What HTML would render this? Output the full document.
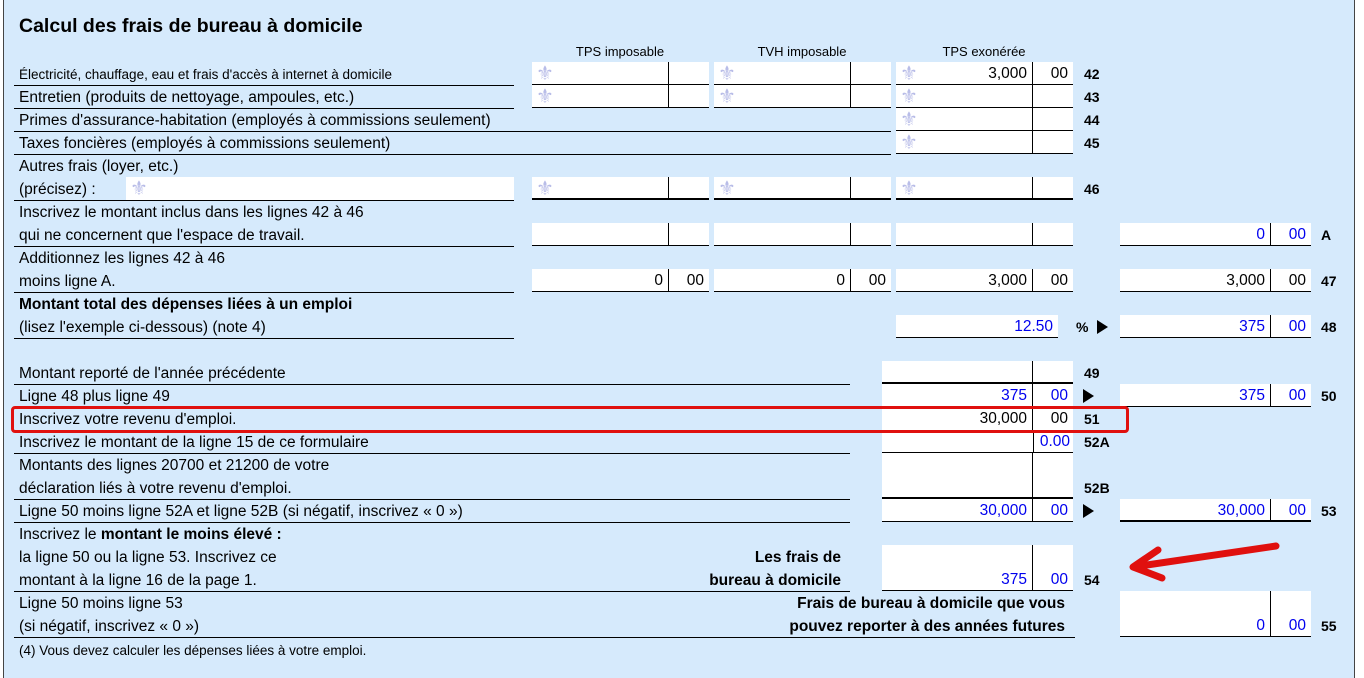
<!DOCTYPE html>
<html><head><meta charset="utf-8"><style>
*{margin:0;padding:0;box-sizing:border-box}
body{width:1364px;height:678px;background:#fff;font-family:"Liberation Sans",Arial,sans-serif;font-size:15.5px;color:#000;position:relative;overflow:hidden}
#bg{position:absolute;left:3px;top:0;width:1352px;height:678px;background:#d6eafc;border-left:1px solid #444;border-right:1px solid #444}
.a{position:absolute}
.t{position:absolute;line-height:23px;white-space:nowrap}
.h{position:absolute;font-size:13px;line-height:14px;text-align:center}
.ln{position:absolute;height:1px;background:#000}
.f{position:absolute;height:23px;background:#fff;border-bottom:1px solid #000;line-height:23px;text-align:right;padding-right:5px;white-space:nowrap}
.f.k{border-right:1px solid #000}
.f.th{border-bottom:2px solid #000}
.bl{color:#0000ee}
.fl{position:absolute;left:4px;top:0;color:#b9bde8;font-size:20px;line-height:22px;font-family:"DejaVu Sans",sans-serif}
.n{position:absolute;font-weight:bold;font-size:14px;line-height:23px}
.tri{position:absolute;width:0;height:0;border-top:7px solid transparent;border-bottom:7px solid transparent;border-left:11px solid #000}
.b{font-weight:bold;font-size:15.5px}
</style></head><body>
<div id="bg"></div>
<div class="t" style="left:19px;top:15px;font-size:19.5px;font-weight:bold">Calcul des frais de bureau à domicile</div>
<div class="h" style="left:532px;top:45px;width:176px">TPS imposable</div>
<div class="h" style="left:714px;top:45px;width:176px">TVH imposable</div>
<div class="h" style="left:896px;top:45px;width:176px">TPS exonérée</div>

<div class="t" style="left:19px;top:63px;font-size:13.5px">Électricité, chauffage, eau et frais d'accès à internet à domicile</div>
<div class="ln" style="left:14px;top:85px;width:500px"></div>
<div class="t" style="left:19px;top:86px">Entretien (produits de nettoyage, ampoules, etc.)</div>
<div class="ln" style="left:14px;top:108px;width:500px"></div>
<div class="t" style="left:19px;top:109px">Primes d'assurance-habitation (employés à commissions seulement)</div>
<div class="ln" style="left:14px;top:131px;width:877px"></div>
<div class="t" style="left:19px;top:132px">Taxes foncières (employés à commissions seulement)</div>
<div class="ln" style="left:14px;top:154px;width:877px"></div>
<div class="t" style="left:19px;top:155px">Autres frais (loyer, etc.)</div>
<div class="t" style="left:19px;top:178px">(précisez) :</div>
<div class="f" style="left:126px;top:177px;width:388px;border-bottom:none"><span class="fl">⚜</span></div>
<div class="ln" style="left:14px;top:200px;width:500px"></div>
<div class="t" style="left:19px;top:201px">Inscrivez le montant inclus dans les lignes 42 à 46</div>
<div class="t" style="left:19px;top:224px">qui ne concernent que l'espace de travail.</div>
<div class="ln" style="left:14px;top:246px;width:500px"></div>
<div class="t" style="left:19px;top:247px">Additionnez les lignes 42 à 46</div>
<div class="t" style="left:19px;top:270px">moins ligne A.</div>
<div class="ln" style="left:14px;top:292px;width:500px"></div>
<div class="t b" style="left:19px;top:293px">Montant total des dépenses liées à un emploi</div>
<div class="t" style="left:19px;top:316px">(lisez l'exemple ci-dessous) (note 4)</div>
<div class="ln" style="left:14px;top:338px;width:500px"></div>
<div class="t" style="left:19px;top:362px">Montant reporté de l'année précédente</div>
<div class="ln" style="left:14px;top:384px;width:836px"></div>
<div class="t" style="left:19px;top:385px">Ligne 48 plus ligne 49</div>
<div class="ln" style="left:14px;top:407px;width:836px"></div>
<div class="t" style="left:19px;top:408px">Inscrivez votre revenu d'emploi.</div>
<div class="t" style="left:19px;top:431px">Inscrivez le montant de la ligne 15 de ce formulaire</div>
<div class="ln" style="left:14px;top:453px;width:836px"></div>
<div class="t" style="left:19px;top:454px">Montants des lignes 20700 et 21200 de votre</div>
<div class="t" style="left:19px;top:477px">déclaration liés à votre revenu d'emploi.</div>
<div class="ln" style="left:14px;top:499px;width:836px"></div>
<div class="t" style="left:19px;top:500px">Ligne 50 moins ligne 52A et ligne 52B (si négatif, inscrivez « 0 »)</div>
<div class="ln" style="left:14px;top:522px;width:836px"></div>
<div class="t" style="left:19px;top:523px">Inscrivez le <b>montant le moins élevé :</b></div>
<div class="t" style="left:19px;top:546px">la ligne 50 ou la ligne 53. Inscrivez ce</div>
<div class="t" style="left:19px;top:569px">montant à la ligne 16 de la page 1.</div>
<div class="t b" style="left:650px;top:546px;width:191px;text-align:right">Les frais de</div>
<div class="t b" style="left:650px;top:569px;width:191px;text-align:right">bureau à domicile</div>
<div class="ln" style="left:14px;top:591px;width:836px"></div>
<div class="t" style="left:19px;top:592px">Ligne 50 moins ligne 53</div>
<div class="t" style="left:19px;top:615px">(si négatif, inscrivez « 0 »)</div>
<div class="t b" style="left:700px;top:592px;width:365px;text-align:right">Frais de bureau à domicile que vous</div>
<div class="t b" style="left:700px;top:615px;width:365px;text-align:right">pouvez reporter à des années futures</div>
<div class="ln" style="left:14px;top:637px;width:1061px"></div>
<div class="t" style="left:19px;top:639px;font-size:13.5px">(4) Vous devez calculer les dépenses liées à votre emploi.</div>

<div class="f k" style="left:532px;top:62px;width:137px"><span class="fl">⚜</span></div><div class="f" style="left:669px;top:62px;width:40px"></div>
<div class="f k" style="left:714px;top:62px;width:137px"><span class="fl">⚜</span></div><div class="f" style="left:851px;top:62px;width:40px"></div>
<div class="f k" style="left:896px;top:62px;width:137px"><span class="fl">⚜</span>3,000</div><div class="f" style="left:1033px;top:62px;width:40px">00</div>
<div class="n" style="left:1084px;top:63px">42</div>
<div class="f k" style="left:532px;top:85px;width:137px"><span class="fl">⚜</span></div><div class="f" style="left:669px;top:85px;width:40px"></div>
<div class="f k" style="left:714px;top:85px;width:137px"><span class="fl">⚜</span></div><div class="f" style="left:851px;top:85px;width:40px"></div>
<div class="f k" style="left:896px;top:85px;width:137px"><span class="fl">⚜</span></div><div class="f" style="left:1033px;top:85px;width:40px"></div>
<div class="n" style="left:1084px;top:86px">43</div>
<div class="f k" style="left:896px;top:108px;width:137px"><span class="fl">⚜</span></div><div class="f" style="left:1033px;top:108px;width:40px"></div>
<div class="n" style="left:1084px;top:109px">44</div>
<div class="f k" style="left:896px;top:131px;width:137px"><span class="fl">⚜</span></div><div class="f" style="left:1033px;top:131px;width:40px"></div>
<div class="n" style="left:1084px;top:132px">45</div>
<div class="f k th" style="left:532px;top:177px;width:137px"><span class="fl">⚜</span></div><div class="f th" style="left:669px;top:177px;width:40px"></div>
<div class="f k th" style="left:714px;top:177px;width:137px"><span class="fl">⚜</span></div><div class="f th" style="left:851px;top:177px;width:40px"></div>
<div class="f k th" style="left:896px;top:177px;width:137px"><span class="fl">⚜</span></div><div class="f th" style="left:1033px;top:177px;width:40px"></div>
<div class="n" style="left:1084px;top:178px">46</div>
<div class="f k" style="left:532px;top:223px;width:137px"></div><div class="f" style="left:669px;top:223px;width:40px"></div>
<div class="f k" style="left:714px;top:223px;width:137px"></div><div class="f" style="left:851px;top:223px;width:40px"></div>
<div class="f k" style="left:896px;top:223px;width:137px"></div><div class="f" style="left:1033px;top:223px;width:40px"></div>
<div class="f k bl" style="left:1120px;top:223px;width:151px">0</div><div class="f bl" style="left:1271px;top:223px;width:40px">00</div>
<div class="n" style="left:1321px;top:224px">A</div>
<div class="f k" style="left:532px;top:269px;width:137px">0</div><div class="f" style="left:669px;top:269px;width:40px">00</div>
<div class="f k" style="left:714px;top:269px;width:137px">0</div><div class="f" style="left:851px;top:269px;width:40px">00</div>
<div class="f k" style="left:896px;top:269px;width:137px">3,000</div><div class="f" style="left:1033px;top:269px;width:40px">00</div>
<div class="f k" style="left:1120px;top:269px;width:151px">3,000</div><div class="f" style="left:1271px;top:269px;width:40px">00</div>
<div class="n" style="left:1321px;top:270px">47</div>
<div class="f bl" style="left:896px;top:315px;width:162px">12.50</div>
<div class="n" style="left:1076px;top:316px">%</div>
<div class="tri" style="left:1097px;top:320px"></div>
<div class="f k bl" style="left:1120px;top:315px;width:151px">375</div><div class="f bl" style="left:1271px;top:315px;width:40px">00</div>
<div class="n" style="left:1321px;top:316px">48</div>
<div class="f k th" style="left:882px;top:361px;width:151px"></div><div class="f th" style="left:1033px;top:361px;width:40px"></div>
<div class="n" style="left:1084px;top:362px">49</div>
<div class="f k bl" style="left:882px;top:384px;width:151px">375</div><div class="f bl" style="left:1033px;top:384px;width:40px">00</div>
<div class="tri" style="left:1083px;top:389px"></div>
<div class="f k bl" style="left:1120px;top:384px;width:151px">375</div><div class="f bl" style="left:1271px;top:384px;width:40px">00</div>
<div class="n" style="left:1321px;top:385px">50</div>
<div class="f k" style="left:882px;top:407px;width:151px;border-bottom:none">30,000</div><div class="f" style="left:1033px;top:407px;width:40px;border-bottom:none">00</div>
<div class="n" style="left:1084px;top:408px">51</div>
<div class="f" style="left:882px;top:430px;width:151px"></div><div class="f bl" style="left:1033px;top:430px;width:40px;padding-right:3px;border-left:1px solid #000">0.00</div>
<div class="n" style="left:1084px;top:431px">52A</div>
<div class="f k th" style="left:882px;top:453px;width:151px;height:46px"></div><div class="f th" style="left:1033px;top:453px;width:40px;height:46px"></div>
<div class="n" style="left:1084px;top:477px">52B</div>
<div class="f k bl" style="left:882px;top:499px;width:151px">30,000</div><div class="f bl" style="left:1033px;top:499px;width:40px">00</div>
<div class="tri" style="left:1083px;top:504px"></div>
<div class="f k bl th" style="left:1120px;top:499px;width:151px">30,000</div><div class="f bl th" style="left:1271px;top:499px;width:40px">00</div>
<div class="n" style="left:1321px;top:500px">53</div>
<div class="f k bl" style="left:882px;top:545px;width:151px;height:46px;line-height:69px">375</div><div class="f bl" style="left:1033px;top:545px;width:40px;height:46px;line-height:69px">00</div>
<div class="n" style="left:1084px;top:569px">54</div>
<div class="f k bl" style="left:1120px;top:591px;width:151px;height:46px;line-height:69px">0</div><div class="f bl" style="left:1271px;top:591px;width:40px;height:46px;line-height:69px">00</div>
<div class="n" style="left:1321px;top:615px">55</div>

<div class="a" style="left:11px;top:406px;width:1118px;height:27px;border:3px solid #e0100e;border-radius:4px"></div>
<svg class="a" style="left:0;top:0" width="1364" height="678">
<path d="M1276 546 L1140 566" stroke="#e0100e" stroke-width="7" stroke-linecap="round" fill="none"/>
<path d="M1158 550 L1133 567 L1162 578" stroke="#e0100e" stroke-width="7" stroke-linecap="round" stroke-linejoin="round" fill="none"/>
</svg>
</body></html>
